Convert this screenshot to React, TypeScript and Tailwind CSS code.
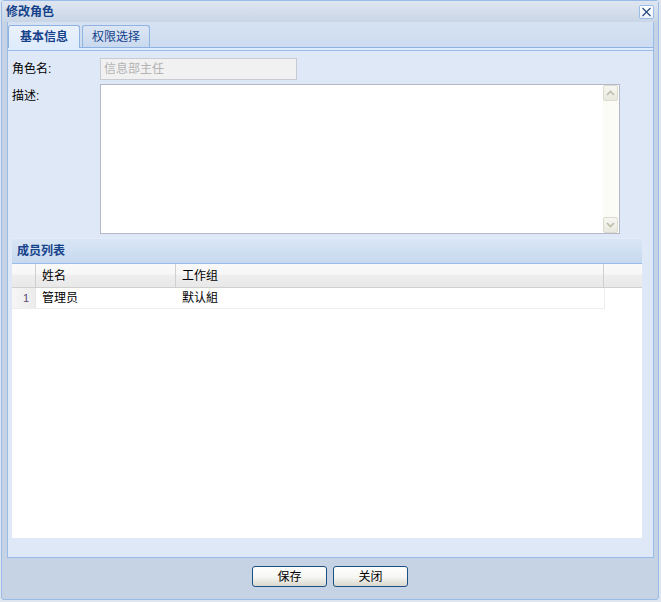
function CloseBtn() {
  return (
    <div className="w-[15px] h-[14px] border border-[#99bbe8] rounded-[2px] bg-[linear-gradient(#ffffff,#eef3fa)] flex items-center justify-center">
      <svg width="11" height="10" viewBox="0 0 11 10">
        <path d="M1.5 1 L9.5 9 M9.5 1 L1.5 9" stroke="#2b4a80" strokeWidth="1.2" fill="none" />
      </svg>
    </div>
  );
}

function ScrollBtn({ up }: { up: boolean }) {
  return (
    <div className="h-[16px] w-[15px] border border-[#dcdbd0] rounded-[2px] bg-[linear-gradient(#f7f7f2,#e9e8df)] flex items-center justify-center">
      <svg width="9" height="6" viewBox="0 0 9 6">
        <path d={up ? "M1 5 L4.5 1.5 L8 5" : "M1 1 L4.5 4.5 L8 1"} stroke="#bdbcaa" strokeWidth="1.6" fill="none" />
      </svg>
    </div>
  );
}

function Button({ label }: { label: string }) {
  return (
    <div className="w-[75px] h-[21px] border border-[#1d5184] rounded-[3px] bg-[linear-gradient(#ffffff,#f5f5f1_55%,#d7d7cf)] flex items-center justify-center text-black text-[12px] leading-[14px]">
      {label}
    </div>
  );
}

export default function App() {
  return (
    <div className="w-[661px] h-[602px] bg-[#dfe6ef] pl-[1px] font-['Liberation_Sans','Noto_Sans_CJK_SC',sans-serif] text-[12px] leading-[14px]">
      <div className="w-[658px] h-[600px] border border-[#99bbe8] rounded-[3px] bg-[#c6d3e4] flex flex-col">
        {/* title bar */}
        <div className="h-[21px] flex items-center justify-between pl-[4px] pr-[4px] bg-[linear-gradient(#dfe6f0,#c9d6e6)]">
          <span className="font-bold text-[#15428b] text-[12px] leading-[14px]">修改角色</span>
          <CloseBtn />
        </div>

        {/* tab panel */}
        <div className="ml-[5px] w-[647px] flex flex-col">
          <div className="h-[26px] border-x border-b border-x-[#99bbe8] border-b-[#8db2e3] bg-[linear-gradient(#d6e2f2,#cddcf0)] flex items-end">
            <div className="relative z-10 -mb-px w-[72px] h-[23px] border border-b-0 border-[#8db2e3] rounded-t-[3px] bg-[linear-gradient(#eaf1fb,#deecfd)] flex items-center justify-center font-bold text-[#15428b]">
              基本信息
            </div>
            <div className="ml-[2px] w-[68px] h-[22px] border border-b-0 border-[#8db2e3] rounded-t-[3px] bg-[linear-gradient(#dce6f4,#c9d9ee)] flex items-center justify-center text-[#15428b]">
              权限选择
            </div>
          </div>
          <div className="h-[2px] bg-[#deecfd] border-x border-[#99bbe8]" />
          <div className="h-[508px] border border-[#99bbe8] bg-[#dfe8f6] pt-[7px] pl-[4px] flex flex-col">
            {/* role name */}
            <div className="flex items-center">
              <div className="w-[88px] text-black">角色名:</div>
              <div className="w-[197px] h-[22px] border border-[#c9cbd3] bg-[#f1f1f1] flex items-center pl-[3px] text-[#b3b3b3]">
                信息部主任
              </div>
            </div>
            {/* description */}
            <div className="mt-[4px] flex items-start">
              <div className="w-[88px] pt-[5px] text-black">描述:</div>
              <div className="w-[520px] h-[150px] border border-[#b5b8c8] bg-white flex">
                <div className="flex-1" />
                <div className="w-[16px] flex flex-col bg-[#fcfcf6]">
                  <ScrollBtn up={true} />
                  <div className="flex-1" />
                  <ScrollBtn up={false} />
                </div>
              </div>
            </div>
            {/* member panel */}
            <div className="mt-[4px] w-[630px] h-[300px] flex flex-col">
              <div className="h-[26px] border-t border-t-[#e3ecf8] border-b border-b-[#99bbe8] bg-[linear-gradient(#d9e5f4,#c7d9f0)] flex items-center pl-[5px] font-bold text-[#15428b]">
                成员列表
              </div>
              <div className="flex-1 bg-white flex flex-col">
                <div className="h-[24px] border-b border-[#d0d0d0] bg-[linear-gradient(#f9f9f9_0,#f7f7f7_10px,#eeeeee_11px,#e8e8e8_100%)] flex text-black">
                  <div className="w-[24px] border-r border-[#d0d0d0]" />
                  <div className="w-[140px] border-r border-[#d0d0d0] pl-[6px] flex items-center">姓名</div>
                  <div className="w-[428px] border-r border-[#d0d0d0] pl-[6px] flex items-center">工作组</div>
                  <div className="flex-1" />
                </div>
                <div className="w-[593px] h-[21px] border-b border-r border-[#ededed] flex text-black">
                  <div className="w-[24px] bg-[linear-gradient(90deg,#f6f6f6,#ececec)] border-r border-[#e4e4e4] flex items-center justify-end pr-[6px] text-[11px] text-[#5b4a6e]">
                    1
                  </div>
                  <div className="w-[140px] pl-[6px] flex items-center">管理员</div>
                  <div className="flex-1 pl-[6px] flex items-center">默认組</div>
                </div>
              </div>
            </div>
          </div>
        </div>

        {/* footer */}
        <div className="flex-1 flex justify-center items-start pt-[8px] gap-[6px]">
          <Button label="保存" />
          <Button label="关闭" />
        </div>
      </div>
    </div>
  );
}
